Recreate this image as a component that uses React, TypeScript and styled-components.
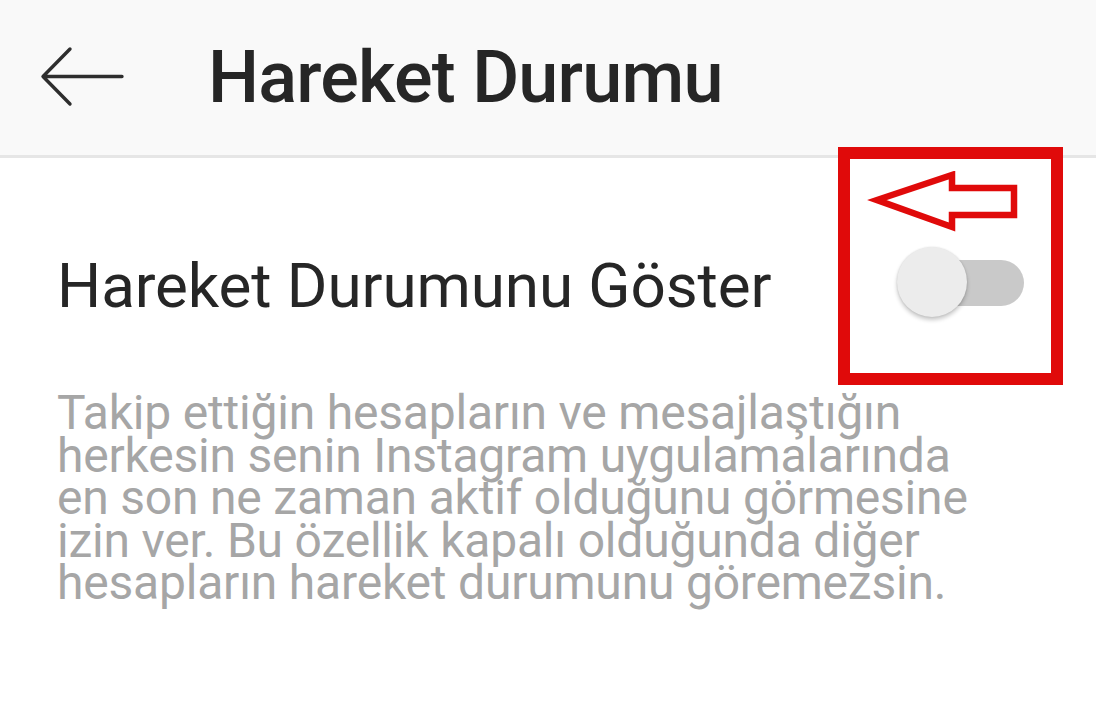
import React, { useState } from 'react';
import styled, { createGlobalStyle } from 'styled-components';

const GlobalStyle = createGlobalStyle`
  html, body {
    margin: 0;
    padding: 0;
    background: #ffffff;
    font-family: Roboto, "Noto Sans", Arial, sans-serif;
  }
`;

const Screen = styled.div`
  width: 1096px;
  height: 720px;
  overflow: hidden;
  background: #ffffff;
  display: flex;
  flex-direction: column;
`;

const TopBar = styled.header`
  height: 158px;
  background: #f9f9f9;
  border-bottom: 3px solid #e6e6e6;
  display: flex;
  align-items: center;
  padding: 0 0 0 40px;
  gap: 82px;
  box-sizing: border-box;
  flex-shrink: 0;
`;

const BackButton = styled.button`
  border: none;
  background: none;
  padding: 0;
  width: 86px;
  height: 64px;
  display: flex;
  align-items: center;
  cursor: pointer;
  margin-top: -2px;
`;

const Title = styled.h1`
  margin: 0;
  margin-top: 0;
  font-size: 72px;
  font-weight: 500;
  color: #262626;
  letter-spacing: -0.8px;
`;

const Body = styled.main`
  padding: 0 32px 0 57px;
  display: flex;
  flex-direction: column;
`;

const SettingRow = styled.div`
  position: relative;
  height: 228px;
  display: flex;
  align-items: center;
  justify-content: space-between;
`;

const Label = styled.span`
  font-size: 62px;
  color: #262626;
  letter-spacing: -0.1px;
  margin-top: 26px;
`;

const Track = styled.button<{ $on: boolean }>`
  position: relative;
  width: 124px;
  height: 46px;
  border: none;
  border-radius: 23px;
  padding: 0;
  margin: 22px 40px 0 0;
  background: ${(p) => (p.$on ? '#9cc7f5' : '#c9c9c9')};
  cursor: pointer;
`;

const Thumb = styled.span<{ $on: boolean }>`
  position: absolute;
  top: 50%;
  left: ${(p) => (p.$on ? '54px' : '-3px')};
  width: 70px;
  height: 70px;
  margin-top: -36px;
  border-radius: 50%;
  background: ${(p) => (p.$on ? '#3897f0' : '#ececec')};
  box-shadow: 0 3px 4px rgba(0, 0, 0, 0.22), 0 0 2px rgba(0, 0, 0, 0.12);
`;

const Highlight = styled.div`
  position: absolute;
  left: 781px;
  top: -11px;
  width: 225px;
  height: 238px;
  border: 12px solid #e00a0a;
  box-sizing: border-box;
  pointer-events: none;
`;

const Pointer = styled.svg`
  position: absolute;
  left: 8px;
  top: 12px;
`;

const Description = styled.p`
  margin: 0;
  margin-top: 6px;
  width: 935px;
  font-size: 48px;
  line-height: 42.5px;
  color: #a6a6a6;
  letter-spacing: -0.2px;
`;

const BackArrow = () => (
  <svg width="84" height="64" viewBox="0 0 84 64" fill="none">
    <path
      d="M82 31.5H5M30 4L3 31.5 30 59"
      stroke="#2e2e2e"
      strokeWidth="3.4"
      strokeLinecap="round"
      strokeLinejoin="round"
    />
  </svg>
);

export default function App() {
  const [active, setActive] = useState(false);

  return (
    <Screen>
      <GlobalStyle />
      <TopBar>
        <BackButton aria-label="Geri">
          <BackArrow />
        </BackButton>
        <Title>Hareket Durumu</Title>
      </TopBar>
      <Body>
        <SettingRow>
          <Label>Hareket Durumunu Göster</Label>
          <Track $on={active} onClick={() => setActive(!active)}>
            <Thumb $on={active} />
          </Track>
          <Highlight>
            <Pointer width="164" height="64" viewBox="0 0 164 64">
              <polygon
                points="19,29 94,4 94,17 156,17 156,44 94,44 94,56"
                fill="none"
                stroke="#e00a0a"
                strokeWidth="6.5"
                strokeLinejoin="miter"
              />
            </Pointer>
          </Highlight>
        </SettingRow>
        <Description>
          Takip ettiğin hesapların ve mesajlaştığın herkesin senin Instagram uygulamalarında en son ne
          zaman aktif olduğunu görmesine izin ver. Bu özellik kapalı olduğunda diğer hesapların hareket
          durumunu göremezsin.
        </Description>
      </Body>
    </Screen>
  );
}
